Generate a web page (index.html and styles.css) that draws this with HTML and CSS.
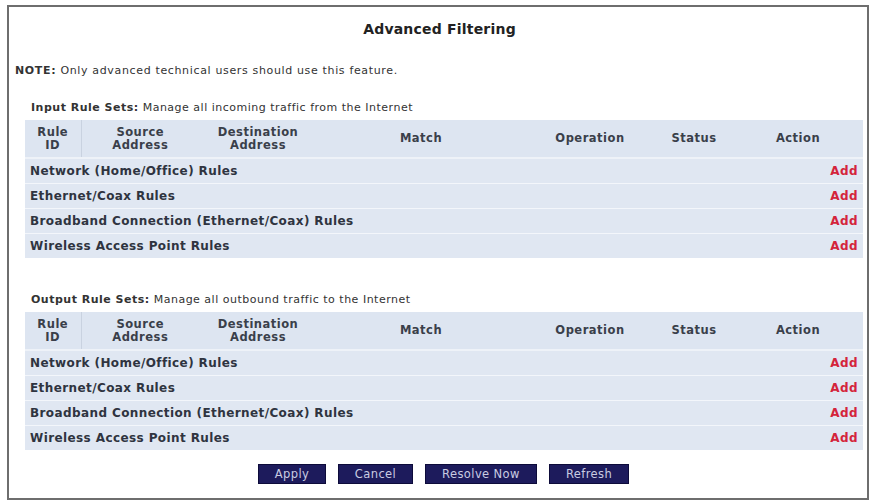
FILE: index.html
```html
<!DOCTYPE html>
<html lang="en">
  <head>
    <meta charset="UTF-8" />
    <title>Advanced Filtering</title>
    <link rel="stylesheet" href="styles.css">
  </head>
  <body>
    <div class="frame">
      <h1>Advanced Filtering</h1>
      <p class="note"><b>NOTE:</b> Only advanced technical users should use this feature.</p>

      <p class="caption"><b>Input Rule Sets:</b> Manage all incoming traffic from the Internet</p>
      <table class="rules">
        <colgroup>
          <col class="c-id" /><col class="c-src" /><col class="c-dst" /><col class="c-match" />
          <col class="c-op" /><col class="c-status" /><col class="c-action" />
        </colgroup>
        <tr class="head">
          <th class="sep">Rule<br />ID</th>
          <th>Source<br />Address</th>
          <th>Destination<br />Address</th>
          <th>Match</th>
          <th>Operation</th>
          <th>Status</th>
          <th>Action</th>
        </tr>
        <tr><td colspan="6">Network (Home/Office) Rules</td><td class="add">Add</td></tr>
        <tr><td colspan="6">Ethernet/Coax Rules</td><td class="add">Add</td></tr>
        <tr><td colspan="6">Broadband Connection (Ethernet/Coax) Rules</td><td class="add">Add</td></tr>
        <tr><td colspan="6">Wireless Access Point Rules</td><td class="add">Add</td></tr>
      </table>

      <p class="caption out"><b>Output Rule Sets:</b> Manage all outbound traffic to the Internet</p>
      <table class="rules">
        <colgroup>
          <col class="c-id" /><col class="c-src" /><col class="c-dst" /><col class="c-match" />
          <col class="c-op" /><col class="c-status" /><col class="c-action" />
        </colgroup>
        <tr class="head">
          <th class="sep">Rule<br />ID</th>
          <th>Source<br />Address</th>
          <th>Destination<br />Address</th>
          <th>Match</th>
          <th>Operation</th>
          <th>Status</th>
          <th>Action</th>
        </tr>
        <tr><td colspan="6">Network (Home/Office) Rules</td><td class="add">Add</td></tr>
        <tr><td colspan="6">Ethernet/Coax Rules</td><td class="add">Add</td></tr>
        <tr><td colspan="6">Broadband Connection (Ethernet/Coax) Rules</td><td class="add">Add</td></tr>
        <tr><td colspan="6">Wireless Access Point Rules</td><td class="add">Add</td></tr>
      </table>

      <div class="buttons">
        <button class="b-apply">Apply</button>
        <button class="b-cancel">Cancel</button>
        <button class="b-resolve">Resolve Now</button>
        <button class="b-refresh">Refresh</button>
      </div>
    </div>
  </body>
</html>
```

FILE: styles.css
```css
body {
  margin: 5px 0 0 7px;
  background: #ffffff;
  font-family: "DejaVu Sans", Verdana, sans-serif;
  color: #333;
}
.frame {
  box-sizing: border-box;
  width: 862px;
  height: 495px;
  border: 2px solid #6e6e6e;
  background: #fff;
  padding: 0 3px 0 6px;
}
h1 {
  margin: 0;
  padding-top: 12px;
  font-size: 14px;
  line-height: 20px;
  letter-spacing: 0.2px;
  text-align: center;
  color: #222;
}
.note {
  margin: 25px 0 0 0;
  font-size: 11px;
  line-height: 14px;
  letter-spacing: 0.65px;
}
.caption {
  margin: 24px 0 6px 16px;
  font-size: 11px;
  line-height: 12px;
  letter-spacing: 0.5px;
}
.caption.out {
  margin-top: 36px;
}
.rules {
  margin-left: 10px;
  width: 838px;
  table-layout: fixed;
  border-collapse: collapse;
  background: #e0e7f2;
}
.c-id { width: 56px; }
.c-src { width: 118px; }
.c-dst { width: 118px; }
.c-match { width: 208px; }
.c-op { width: 130px; }
.c-status { width: 78px; }
.c-action { width: 130px; }
.head th {
  height: 37px;
  padding: 0;
  font-size: 11.5px;
  line-height: 13px;
  letter-spacing: 0.5px;
  color: #3a3f4a;
  background: #dde5f1;
  border-bottom: 2px solid #eef2f8;
}
.head th.sep {
  border-right: 1px solid #c9d2e0;
}
.rules td {
  height: 24px;
  padding: 0 0 0 5px;
  font-size: 12px;
  font-weight: bold;
  letter-spacing: 0.4px;
  color: #2f3440;
  border-top: 1px solid #f3f6fb;
}
.rules td.add {
  text-align: right;
  padding-right: 5px;
  color: #d4243b;
}
.buttons {
  display: flex;
  justify-content: center;
  gap: 12px;
  margin: 14px 0 0 8px;
}
button {
  height: 20px;
  padding: 0;
  border: 1px solid #0d0b3a;
  background: #1d1b5c;
  color: #c9cbe2;
  font-family: "DejaVu Sans", Verdana, sans-serif;
  font-size: 11.5px;
  letter-spacing: 0.4px;
}
.b-apply { width: 68px; }
.b-cancel { width: 75px; }
.b-resolve { width: 112px; }
.b-refresh { width: 80px; }
```
